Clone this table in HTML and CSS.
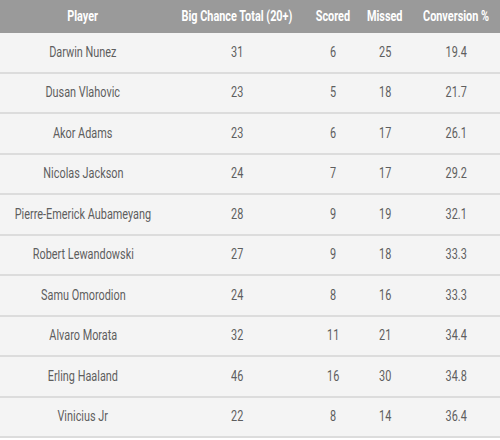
FILE: index.html
```html
<!DOCTYPE html>
<html>
<head>
<meta charset="utf-8">
<link rel="stylesheet" href="styles.css">
</head>
<body>
<table class="stats">
  <colgroup>
    <col class="c-player"><col class="c-total"><col class="c-scored"><col class="c-missed"><col class="c-conv">
  </colgroup>
  <thead>
    <tr><th><div class="cell"><span>Player</span></div></th><th><div class="cell"><span>Big Chance Total (20+)</span></div></th><th><div class="cell"><span>Scored</span></div></th><th><div class="cell"><span>Missed</span></div></th><th><div class="cell"><span>Conversion %</span></div></th></tr>
  </thead>
  <tbody>
    <tr><td><div class="cell"><span>Darwin Nunez</span></div></td><td><div class="cell"><span>31</span></div></td><td><div class="cell"><span>6</span></div></td><td><div class="cell"><span>25</span></div></td><td><div class="cell"><span>19.4</span></div></td></tr>
    <tr><td><div class="cell"><span>Dusan Vlahovic</span></div></td><td><div class="cell"><span>23</span></div></td><td><div class="cell"><span>5</span></div></td><td><div class="cell"><span>18</span></div></td><td><div class="cell"><span>21.7</span></div></td></tr>
    <tr><td><div class="cell"><span>Akor Adams</span></div></td><td><div class="cell"><span>23</span></div></td><td><div class="cell"><span>6</span></div></td><td><div class="cell"><span>17</span></div></td><td><div class="cell"><span>26.1</span></div></td></tr>
    <tr><td><div class="cell"><span>Nicolas Jackson</span></div></td><td><div class="cell"><span>24</span></div></td><td><div class="cell"><span>7</span></div></td><td><div class="cell"><span>17</span></div></td><td><div class="cell"><span>29.2</span></div></td></tr>
    <tr><td><div class="cell"><span>Pierre-Emerick Aubameyang</span></div></td><td><div class="cell"><span>28</span></div></td><td><div class="cell"><span>9</span></div></td><td><div class="cell"><span>19</span></div></td><td><div class="cell"><span>32.1</span></div></td></tr>
    <tr><td><div class="cell"><span>Robert Lewandowski</span></div></td><td><div class="cell"><span>27</span></div></td><td><div class="cell"><span>9</span></div></td><td><div class="cell"><span>18</span></div></td><td><div class="cell"><span>33.3</span></div></td></tr>
    <tr><td><div class="cell"><span>Samu Omorodion</span></div></td><td><div class="cell"><span>24</span></div></td><td><div class="cell"><span>8</span></div></td><td><div class="cell"><span>16</span></div></td><td><div class="cell"><span>33.3</span></div></td></tr>
    <tr><td><div class="cell"><span>Alvaro Morata</span></div></td><td><div class="cell"><span>32</span></div></td><td><div class="cell"><span>11</span></div></td><td><div class="cell"><span>21</span></div></td><td><div class="cell"><span>34.4</span></div></td></tr>
    <tr><td><div class="cell"><span>Erling Haaland</span></div></td><td><div class="cell"><span>46</span></div></td><td><div class="cell"><span>16</span></div></td><td><div class="cell"><span>30</span></div></td><td><div class="cell"><span>34.8</span></div></td></tr>
    <tr><td><div class="cell"><span>Vinicius Jr</span></div></td><td><div class="cell"><span>22</span></div></td><td><div class="cell"><span>8</span></div></td><td><div class="cell"><span>14</span></div></td><td><div class="cell"><span>36.4</span></div></td></tr>
  </tbody>
</table>
</body>
</html>
```
FILE: styles.css
```css
html, body {
  margin: 0;
  padding: 0;
  background: #ffffff;
}
.stats {
  width: 500px;
  border-collapse: collapse;
  table-layout: fixed;
  font-family: "Roboto", "Liberation Sans", sans-serif;
  font-size: 14.5px;
  white-space: nowrap;
}
.c-player { width: 166px; }
.c-total { width: 142px; }
.c-scored { width: 50px; }
.c-missed { width: 54px; }
.c-conv { width: 88px; }
.cell {
  display: flex;
  justify-content: center;
  align-items: center;
}
.cell span {
  display: block;
  transform: scaleX(0.75);
}
.stats th {
  height: 33px;
  padding: 0;
  background: #9a9a9a;
  color: #ffffff;
  font-weight: bold;
  font-size: 14.5px;
}
.stats td {
  height: 38.5px;
  padding: 0;
  background: #f4f4f4;
  color: #5e5e5e;
  border-bottom: 2px solid #dcdcdc;
}
```
